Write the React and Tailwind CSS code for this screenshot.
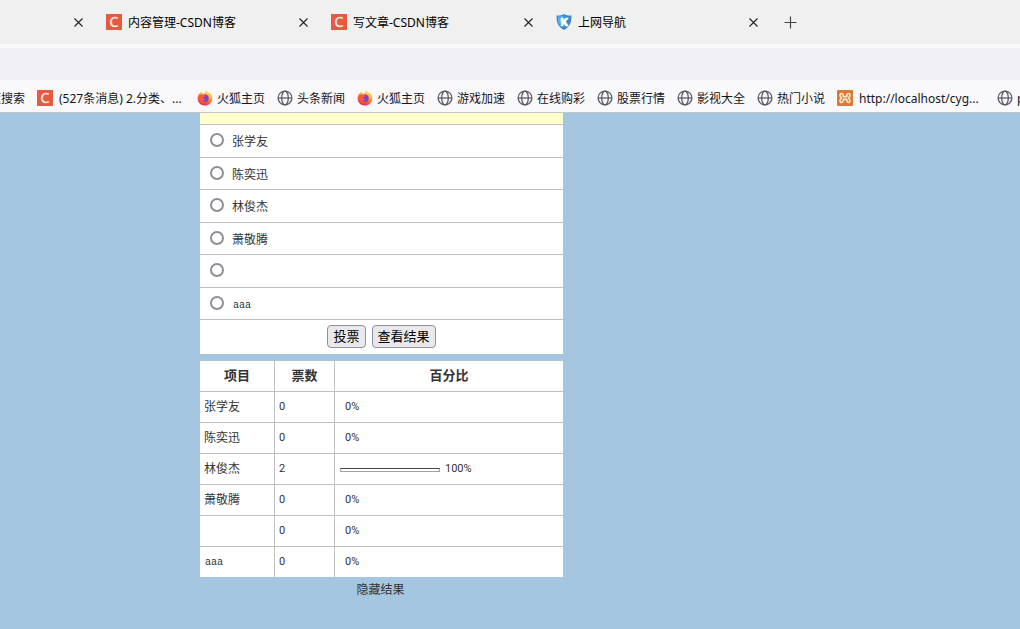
import React from 'react';

function CsdnIcon() {
  return (
    <svg viewBox="0 0 16 16" className="size-4 shrink-0" aria-hidden="true">
      <rect width="16" height="16" fill="#e55b41" />
      <text x="8" y="13" textAnchor="middle" fontSize="14" fill="#fdeee6" stroke="#fdeee6" strokeWidth="0.4" fontFamily="Open Sans, sans-serif">C</text>
    </svg>
  );
}

function ShieldIcon() {
  return (
    <svg viewBox="0 0 16 16" className="size-4 shrink-0" aria-hidden="true">
      <path d="M8 0 C6 1.4 3.2 1.6 .6 1.5 C.5 7 .8 11.8 8 16 C15.2 11.8 15.5 7 15.4 1.5 C12.8 1.6 10 1.4 8 0Z" fill="#3b88c6" />
      <path d="M8 1.3 C6.2 2.4 4 2.6 1.8 2.6 C1.8 6 2 9 3.6 11.2 L5 8Z" fill="#63aee0" />
      <text x="8.2" y="12" textAnchor="middle" fontSize="11.5" fontWeight="900" fill="#fff" stroke="#fff" strokeWidth="0.6" fontFamily="Roboto, sans-serif">K</text>
    </svg>
  );
}

function FirefoxIcon() {
  return (
    <svg viewBox="0 0 16 16" className="size-4 shrink-0" aria-hidden="true">
      <defs>
        <linearGradient id="flame" x1="0.8" y1="0" x2="0.3" y2="1">
          <stop offset="0.1" stopColor="#ffe14a" />
          <stop offset="0.4" stopColor="#ffa63a" />
          <stop offset="0.7" stopColor="#fb5a3c" />
          <stop offset="1" stopColor="#e8225f" />
        </linearGradient>
      </defs>
      <path d="M9.6 .2 C10 1.6 11.2 2.3 12.3 3.4 C12.4 3 12.3 2.6 12.2 2.3 C14.3 3.6 15.4 6 15.4 8.4 C15.4 12.4 12.2 15.5 8 15.5 C3.8 15.5 .6 12.4 .6 8.4 C.6 6.4 1.3 4.6 2.3 3 C2.4 3.6 2.5 4 2.8 4.3 C3 3.2 3.6 2.3 4.4 1.7 C4.5 2.6 4.9 3.2 5.6 3.6 C6.4 3.3 7.2 3.3 8 3.5 C8.2 2.2 8.8 1 9.6 .2Z" fill="url(#flame)" />
      <circle cx="8" cy="8.2" r="3.7" fill="#7b44cf" />
      <path d="M1.4 6.4 C2.4 4.6 4.4 4.2 6 5.1 C7 5.2 8 5.4 8.5 6 C8 7 6.8 6.9 6.2 7.6 C6 8.8 7.2 9.6 8.8 9.2 C8 10.8 6.2 11 4.8 9.6 C5 12 8.4 12.8 10.8 11.4 C8.8 14.2 3 13.8 1.6 9.6Z" fill="#f9573f" />
    </svg>
  );
}

function GlobeIcon() {
  return (
    <svg viewBox="0 0 16 16" className="size-4 shrink-0" fill="none" stroke="#5b5b66" strokeWidth="1.3" aria-hidden="true">
      <circle cx="8" cy="8" r="6.9" />
      <ellipse cx="8" cy="8" rx="3.3" ry="6.9" />
      <path d="M1 8H15" />
    </svg>
  );
}

function XamppIcon() {
  return (
    <svg viewBox="0 0 16 16" className="size-4 shrink-0" aria-hidden="true">
      <rect width="16" height="16" rx="1" fill="#d9793a" />
      <path d="M6.2 6.6 H9.8 V5.4 C9.8 3 13 3 13 5.2 C13 6.8 11.6 7 11.6 8 C11.6 9 13 9.2 13 10.8 C13 13 9.8 13 9.8 10.6 V9.4 H6.2 V10.6 C6.2 13 3 13 3 10.8 C3 9.2 4.4 9 4.4 8 C4.4 7 3 6.8 3 5.2 C3 3 6.2 3 6.2 5.4Z" fill="none" stroke="#fdebc8" strokeWidth="1.6" strokeLinejoin="round" />
    </svg>
  );
}

function CloseButton({ label }) {
  return (
    <button type="button" aria-label={label} className="ml-auto flex size-6 shrink-0 items-center justify-center">
      <svg viewBox="0 0 9 9" className="size-[9px]" stroke="#222" strokeWidth="1.1" aria-hidden="true">
        <path d="M.5 .5L8.5 8.5M8.5 .5L.5 8.5" />
      </svg>
    </button>
  );
}

const tabs = [
  { title: '内容管理-CSDN博客', Icon: CsdnIcon },
  { title: '写文章-CSDN博客', Icon: CsdnIcon },
  { title: '上网导航', Icon: ShieldIcon },
];

const bookmarks = [
  { title: '(527条消息) 2.分类、...', Icon: CsdnIcon, wide: true },
  { title: '火狐主页', Icon: FirefoxIcon },
  { title: '头条新闻', Icon: GlobeIcon },
  { title: '火狐主页', Icon: FirefoxIcon },
  { title: '游戏加速', Icon: GlobeIcon },
  { title: '在线购彩', Icon: GlobeIcon },
  { title: '股票行情', Icon: GlobeIcon },
  { title: '影视大全', Icon: GlobeIcon },
  { title: '热门小说', Icon: GlobeIcon },
  { title: 'http://localhost/cyg...', Icon: XamppIcon, wide: true },
  { title: 'p', Icon: GlobeIcon },
];

const options = [
  { name: '张学友', votes: 0, percent: 0 },
  { name: '陈奕迅', votes: 0, percent: 0 },
  { name: '林俊杰', votes: 2, percent: 100 },
  { name: '萧敬腾', votes: 0, percent: 0 },
  { name: '', votes: 0, percent: 0 },
  { name: 'aaa', votes: 0, percent: 0, latin: true },
];

function OptionName({ option }) {
  return (
    <span>
      <span className={option.latin ? "pl-px font-['Liberation_Mono',monospace] text-[10px]" : ''}>{option.name}</span>
    </span>
  );
}

function Browser() {
  return (
    <header className="overflow-hidden border-b border-[#c3c6ca] bg-[#f9f9fb] text-xs text-[#15141a]">
      <nav aria-label="Tabs" className="flex h-11 items-center bg-[#f0f0f0]">
        <div className="flex w-[98px] shrink-0 pr-2">
          <CloseButton label="关闭" />
        </div>
        {tabs.map(({ title, Icon }) => (
          <div key={title} className="flex w-[225px] shrink-0 items-center px-2">
            <Icon />
            <span className="ml-1.5 pt-0.5 whitespace-nowrap text-black">{title}</span>
            <CloseButton label="关闭" />
          </div>
        ))}
        <button type="button" aria-label="新标签页" className="ml-[3px] flex size-7 items-center justify-center">
          <svg viewBox="0 0 13 13" className="size-[13px]" stroke="#444" strokeWidth="1.2" aria-hidden="true">
            <path d="M6.5 .5V12.5M.5 6.5H12.5" />
          </svg>
        </button>
      </nav>
      <div className="mt-1 h-8 bg-[#f0f0f4]" />
      <nav aria-label="Bookmarks" className="flex h-8 items-center gap-3 pt-1">
        <a href="#" className="flex w-[25px] shrink-0 justify-end overflow-hidden pt-0.5 whitespace-nowrap">百度搜索</a>
        {bookmarks.map(({ title, Icon, wide }, i) => (
          <a key={i} href="#" className={`flex shrink-0 items-center whitespace-nowrap ${wide ? 'w-[148px] gap-1.5' : 'w-[68px] gap-1'}`}>
            <Icon />
            <span className="pt-0.5">{title}</span>
          </a>
        ))}
      </nav>
    </header>
  );
}

function Poll() {
  return (
    <form className="bg-white" onSubmit={(e) => e.preventDefault()}>
      <div className="h-3 border-b border-[#bfbfbf] bg-[#ffffcc]" />
      <div>
        {options.map((o, i) => (
          <label key={i} className="flex items-center gap-2 border-b border-[#bfbfbf] pl-2.5 odd:h-[33px] even:h-8">
            <input
              type="radio"
              name="singer"
              aria-label={o.name || '空'}
              className="mb-0.5 size-3.5 shrink-0 appearance-none rounded-full border-2 border-[#8f8f96] bg-white checked:border-4 checked:border-blue-600"
            />
            <OptionName option={o} />
          </label>
        ))}
      </div>
      <div className="flex h-[34px] items-center justify-center gap-1.5 pb-0.5 text-[13px] text-black">
        <button type="submit" className="h-[23px] rounded border border-[#8f8f9d] bg-[#e9e9ed] px-[5px] leading-5">投票</button>
        <button type="button" className="h-[23px] rounded border border-[#8f8f9d] bg-[#e9e9ed] px-[5px] leading-5">查看结果</button>
      </div>
    </form>
  );
}

function Results() {
  return (
    <table className="mt-[7px] w-full table-fixed border-separate border-spacing-0 bg-white">
      <colgroup>
        <col className="w-[75px]" />
        <col className="w-[60px]" />
        <col />
      </colgroup>
      <thead className="text-[13px]">
        <tr>
          <th className="h-[31px] border-r border-b border-[#bfbfbf] p-0 pb-0.5">项目</th>
          <th className="border-r border-b border-[#bfbfbf] p-0 pb-0.5">票数</th>
          <th className="border-b border-[#bfbfbf] p-0 pb-0.5">百分比</th>
        </tr>
      </thead>
      <tbody>
        {options.map((o, i) => (
          <tr key={i} className="h-[31px] last:h-[30px] [&>td]:border-b [&>td]:border-[#bfbfbf] last:[&>td]:border-b-0">
            <td className="border-r p-0 pb-0.5 pl-1">
              <OptionName option={o} />
            </td>
            <td className="border-r p-0 pl-1 font-[Roboto,sans-serif] text-[11px]">{o.votes}</td>
            <td className="p-0 pl-[5px] font-[Roboto,sans-serif] text-[11px]">
              <div className="flex items-center gap-[5px]">
                <div
                  className={o.percent ? 'mt-0.5 h-1 border border-[#a0a0a0] border-t-[#444]' : ''}
                  style={{ width: `${o.percent}px` }}
                />
                {o.percent}%
              </div>
            </td>
          </tr>
        ))}
      </tbody>
    </table>
  );
}

export default function App() {
  return (
    <div className="flex min-h-screen flex-col bg-[#a5c6e0] font-['Noto_Sans','Noto_Sans_CJK_SC',sans-serif]">
      <Browser />
      <main className="ml-[200px] w-[363px] font-['Noto_Sans_CJK_SC',sans-serif] text-xs text-[#333]">
        <Poll />
        <Results />
        <div className="pt-1 pr-0.5 text-center">
          <a href="#">隐藏结果</a>
        </div>
      </main>
    </div>
  );
}
